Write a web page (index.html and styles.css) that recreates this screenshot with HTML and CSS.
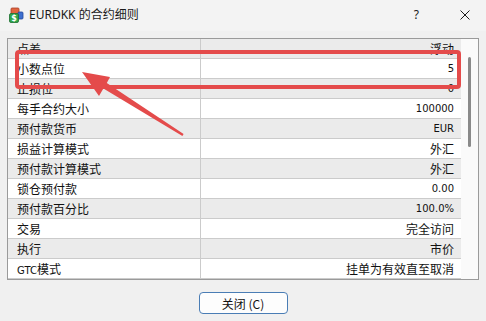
FILE: index.html
```html
<!DOCTYPE html>
<html lang="zh-CN">
<head>
    <meta charset="UTF-8">
    <title>EURDKK 的合约细则</title>
    <link rel="stylesheet" href="styles.css">
</head>
<body>
    <div class="window">
        <div class="titlebar">
            <svg class="app-icon" width="16" height="16" viewBox="0 0 16 16">
                <rect x="3" y="1" width="8" height="7" rx="1" fill="#e0653f" stroke="#a8402a" stroke-width="0.8"/>
                <rect x="10" y="5" width="5" height="7" rx="1" fill="#3d6fd0" stroke="#24479a" stroke-width="0.8"/>
                <rect x="1.5" y="6.5" width="9" height="9" rx="1.5" fill="#2fa64a" stroke="#1d6e30" stroke-width="0.8"/>
                <text x="6" y="14" font-size="8" font-family="DejaVu Sans" font-weight="bold" fill="#fff" text-anchor="middle">$</text>
            </svg>
            <span class="title">EURDKK 的合约细则</span>
            <span class="help">?</span>
            <svg class="close" width="12" height="12" viewBox="0 0 12 12">
                <path d="M1.5 1.5 L10.5 10.5 M10.5 1.5 L1.5 10.5" stroke="#1a1a1a" stroke-width="1"/>
            </svg>
        </div>

        <div class="content">
            <div class="list">
                <div class="rows">
                    <div class="row odd"><span class="key">点差</span><span class="val">浮动</span></div>
                    <div class="row"><span class="key">小数点位</span><span class="val num">5</span></div>
                    <div class="row odd"><span class="key">止损位</span><span class="val num">0</span></div>
                    <div class="row"><span class="key">每手合约大小</span><span class="val num">100000</span></div>
                    <div class="row odd"><span class="key">预付款货币</span><span class="val num">EUR</span></div>
                    <div class="row"><span class="key">损益计算模式</span><span class="val">外汇</span></div>
                    <div class="row odd"><span class="key">预付款计算模式</span><span class="val">外汇</span></div>
                    <div class="row"><span class="key">锁仓预付款</span><span class="val num">0.00</span></div>
                    <div class="row odd"><span class="key">预付款百分比</span><span class="val num">100.0%</span></div>
                    <div class="row"><span class="key">交易</span><span class="val">完全访问</span></div>
                    <div class="row odd"><span class="key">执行</span><span class="val">市价</span></div>
                    <div class="row"><span class="key"><span class="lat">GTC</span>模式</span><span class="val">挂单为有效直至取消</span></div>
                </div>
                <div class="scrollbar"><div class="thumb"></div></div>
            </div>

            <div class="actions">
                <button>关闭 (C)</button>
            </div>
        </div>

        <!-- annotation drawn over the dialog -->
        <svg class="annot" width="486" height="321" viewBox="0 0 486 321">
            <rect x="17" y="52" width="442" height="35" rx="2" fill="none" stroke="#e44b4b" stroke-width="4"/>
            <polygon points="82,72 110,77 106.8,83 183.6,134 182.4,136 103.4,88.4 99,96" fill="#e44b4b"/>
        </svg>
    </div>
</body>
</html>
```

FILE: styles.css
```css
body {
    margin: 0;
    font-family: "Noto Sans", "Noto Sans CJK SC", sans-serif;
    background: #f0f0f0;
}
.window {
    position: relative;
    width: 486px;
    height: 321px;
    background: #f0f0f0;
    overflow: hidden;
}
.titlebar {
    height: 31px;
    display: flex;
    align-items: center;
    background: #f3f3f3;
    padding-left: 8px;
    box-sizing: border-box;
}
.app-icon {
    margin-top: -2px;
    margin-right: 5px;
}
.title {
    font-size: 12px;
    color: #1a1a1a;
    flex: 1;
    margin-top: -3px;
}
.help {
    font-size: 12px;
    color: #1a1a1a;
    margin-right: 40px;
    margin-top: -3px;
}
.close {
    margin-right: 15px;
    margin-top: -1px;
}
.content {
    padding: 7px 7px 0;
}
.list {
    display: flex;
    height: 242px;
    box-sizing: border-box;
    border: 1px solid #9a9a9a;
    background: #fff;
}
.rows {
    width: 453px;
}
.row {
    display: flex;
    height: 20px;
    box-sizing: border-box;
    border-bottom: 1px solid #cbcbcb;
    background: #fff;
    font-family: "Noto Sans CJK SC", sans-serif;
    font-size: 12px;
    line-height: 19px;
    color: #111;
}
.row.odd {
    background: #ebebeb;
}
.key {
    width: 193px;
    border-right: 1px solid #cbcbcb;
    padding-left: 9px;
    box-sizing: border-box;
}
.val {
    flex: 1;
    text-align: right;
    padding-right: 7px;
}
.num, .lat {
    font-family: "DejaVu Sans", sans-serif;
    font-size: 10px;
}
.scrollbar {
    flex: 1;
    background: #fafafa;
    padding-top: 18px;
}
.thumb {
    width: 3px;
    height: 90px;
    margin-left: 7px;
    border-radius: 2px;
    background: #8a8a8a;
}
.actions {
    display: flex;
    justify-content: center;
    margin-top: 12px;
}
button {
    width: 89px;
    height: 22px;
    border: 1px solid #4a7db5;
    border-radius: 4px;
    background: #fdfdfd;
    font-family: "Noto Sans CJK SC", sans-serif;
    font-size: 12px;
    color: #111;
    padding: 0;
}
.annot {
    position: absolute;
    top: 0;
    left: 0;
    pointer-events: none;
}
```
